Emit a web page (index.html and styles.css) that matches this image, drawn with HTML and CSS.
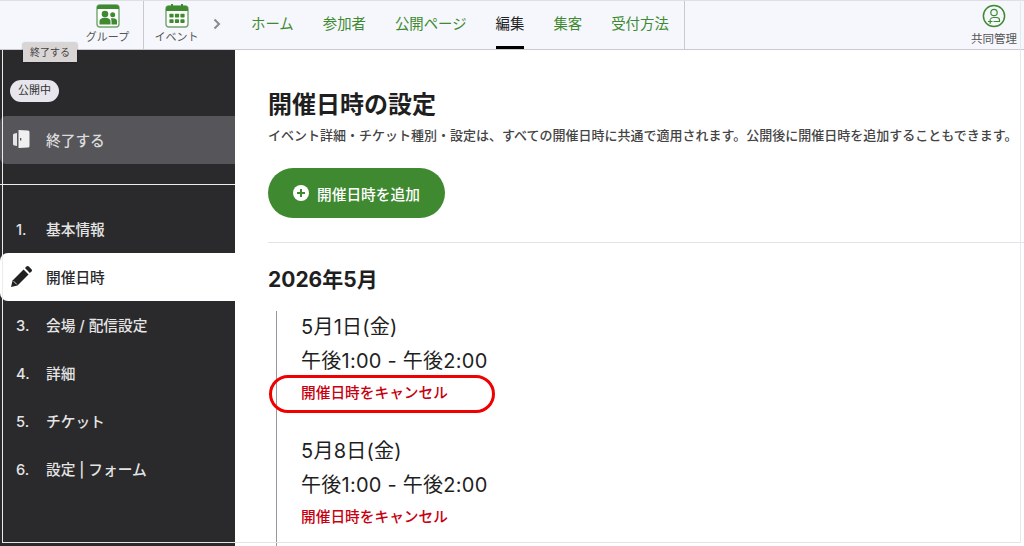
FILE: index.html
```html
<!DOCTYPE html>
<html lang="ja">
  <head>
    <meta charset="UTF-8" />
    <meta name="viewport" content="width=device-width, initial-scale=1.0" />
    <title>開催日時の設定</title>
    <link rel="stylesheet" href="styles.css">
  </head>
  <body>
    <header class="topbar">
      <a class="app-link app-group">
        <svg class="app-icon" viewBox="0 0 24 24" width="24" height="24">
          <rect x="1" y="1" width="22" height="22" rx="3" fill="#fff" stroke="#6fa568" stroke-width="1.4"/>
          <path d="M1 4a3 3 0 0 1 3-3h16a3 3 0 0 1 3 3v1H1z" fill="#3f8a31"/>
          <circle cx="9" cy="10" r="3.300" fill="#3f8a31"/>
          <circle cx="16.700" cy="10.800" r="2.500" fill="#3f8a31"/>
          <path d="M3.500 20.500v-3c0-2.700 2.300-3.800 5.500-3.800s5.500 1.100 5.500 3.800v3z" fill="#3f8a31"/>
          <path d="M15.500 20.500v-3.500c0-1-.4-1.800-.8-2.400.7-.3 1.400-.4 2.300-.4 2.700 0 4 1.100 4 3.100v3.200z" fill="#3f8a31"/>
        </svg>
        <span>グループ</span>
      </a>
      <a class="app-link app-event">
        <svg class="app-icon" viewBox="0 0 24 24" width="24" height="24">
          <rect x="1" y="2" width="22" height="21" rx="3" fill="#fff" stroke="#6fa568" stroke-width="1.4"/>
          <path d="M1 5a3 3 0 0 1 3-3h2V0h2v2h8V0h2v2h2a3 3 0 0 1 3 3v2H1z" fill="#3f8a31"/>
          <g fill="#3f8a31">
            <rect x="4.400" y="9.800" width="4.200" height="3.600" rx=".6"/>
            <rect x="9.900" y="9.800" width="4.200" height="3.600" rx=".6"/>
            <rect x="15.400" y="9.800" width="4.200" height="3.600" rx=".6"/>
            <rect x="4.400" y="15.300" width="4.200" height="3.600" rx=".6"/>
            <rect x="9.900" y="15.300" width="4.200" height="3.600" rx=".6"/>
            <rect x="15.400" y="15.300" width="4.200" height="3.600" rx=".6"/>
          </g>
        </svg>
        <span>イベント</span>
      </a>
      <svg class="crumb" viewBox="0 0 8 12" width="8" height="12">
        <path d="M1.500 1.500 6 6l-4.500 4.500" fill="none" stroke="#8a8a8a" stroke-width="2"/>
      </svg>
      <nav class="tabs">
        <a class="tab">ホーム</a>
        <a class="tab">参加者</a>
        <a class="tab">公開ページ</a>
        <a class="tab tab-active">編集</a>
        <a class="tab">集客</a>
        <a class="tab">受付方法</a>
      </nav>
      <a class="share-link">
        <svg viewBox="0 0 24 24" width="24" height="24">
          <circle cx="12" cy="12" r="10.600" fill="none" stroke="#3f8a31" stroke-width="1.500"/>
          <circle cx="12" cy="8.500" r="3.200" fill="none" stroke="#3f8a31" stroke-width="1.200"/>
          <path d="M8.500 15c.6-1 1.600-1.500 3-1.500h3c2 0 3 1 3 2.600v1.400h-6" fill="none" stroke="#3f8a31" stroke-width="1.200"/>
          <path d="M6 17.500h4.500M8.200 15.200v4.600" fill="none" stroke="#3f8a31" stroke-width="1.200"/>
        </svg>
        <span>共同管理</span>
      </a>
    </header>

    <div class="layout">
      <aside class="sidebar">
        <div class="status-wrap"><span class="status">公開中</span></div>
        <a class="finish-row">
          <svg viewBox="0 0 18 20" width="18" height="20">
            <path d="M2.500 4.500 5 4v13l-2.500-.5A1.500 1.500 0 0 1 1 15V6a1.500 1.500 0 0 1 1.500-1.500z" fill="#e6e6e6"/>
            <path d="M6.500 1 16 1.500a1.500 1.500 0 0 1 1.500 1.500v14a1.500 1.500 0 0 1-1.500 1.500l-9.500.5z" fill="#f0f0f0"/>
            <rect x="8" y="9" width="1.300" height="2.500" fill="#55555a"/>
          </svg>
          <span>終了する</span>
        </a>
        <ol class="steps">
          <li class="step"><span class="step-no">1.</span>基本情報</li>
          <li class="step step-current">
            <svg class="step-no" viewBox="0 0 20 20" width="21" height="21">
              <path d="M0 20l1.500-6.200L12 3.300l4.700 4.700L6.200 18.500z" fill="#222"/>
              <path d="M13.300 2 14.800.5a1.500 1.500 0 0 1 2.100 0l2.600 2.600a1.500 1.500 0 0 1 0 2.100L18 6.700z" fill="#222"/>
              <path d="M2.500 14.500l3 3" stroke="#fff" stroke-width=".8"/>
            </svg>
            開催日時
          </li>
          <li class="step"><span class="step-no">3.</span>会場 / 配信設定</li>
          <li class="step"><span class="step-no">4.</span>詳細</li>
          <li class="step"><span class="step-no">5.</span>チケット</li>
          <li class="step"><span class="step-no">6.</span>設定 | フォーム</li>
        </ol>
      </aside>

      <main class="content">
        <h1 class="page-title">開催日時の設定</h1>
        <p class="page-note">イベント詳細・チケット種別・設定は、すべての開催日時に共通で適用されます。公開後に開催日時を追加することもできます。</p>
        <button class="add-btn">
          <svg viewBox="0 0 16 16" width="16" height="16">
            <circle cx="8" cy="8" r="8" fill="#fff"/>
            <path d="M8 4v8M4 8h8" stroke="#3f8a31" stroke-width="2"/>
          </svg>
          開催日時を追加
        </button>
        <hr class="divider">
        <h2 class="month">2026年5月</h2>
        <div class="dates">
          <div class="date-item">
            <div class="date-line">5月1日(金)</div>
            <div class="date-line">午後1:00 - 午後2:00</div>
            <a class="cancel">開催日時をキャンセル<span class="cancel-ring"></span></a>
          </div>
          <div class="date-item">
            <div class="date-line">5月8日(金)</div>
            <div class="date-line">午後1:00 - 午後2:00</div>
            <a class="cancel">開催日時をキャンセル</a>
          </div>
        </div>
      </main>
    </div>

    <!-- tooltip and the thin frame lines that sit over the page -->
    <div class="tooltip">終了する</div>
    <div class="frame-left"></div>
    <div class="frame-mid"></div>
    <div class="frame-bottom"></div>
    <div class="frame-right"></div>
  </body>
</html>
```

FILE: styles.css
```css
* {
  box-sizing: border-box;
}
html, body {
  height: 100%;
  overflow: hidden;
}
body {
  margin: 0;
  background: #fff;
  color: #1f1f1f;
  font-family: Inter, "Noto Sans CJK JP", sans-serif;
}

/* top bar */
.topbar {
  height: 50px;
  display: flex;
  align-items: stretch;
  background: #f5f7fc;
  border-top: 1px solid #dfdfe4;
  border-bottom: 1px solid #c9c9ce;
}
.app-link {
  display: flex;
  flex-direction: column;
  align-items: center;
  color: #555;
  font-size: 11px;
  line-height: 13px;
  padding-top: 3px;
  white-space: nowrap;
}
.app-icon {
  margin-bottom: 3px;
}
.app-group {
  width: 144px;
  padding-left: 72px;
  border-right: 1px solid #c9c9ce;
}
.app-event {
  width: 65px;
}
.crumb {
  align-self: center;
  margin-left: 4px;
  margin-top: -3px;
}
.tabs {
  display: flex;
  gap: 29px;
  margin-left: 30px;
  border-right: 1px solid #c9c9ce;
  width: 434px;
}
.tab {
  height: 48px;
  line-height: 46px;
  font-size: 14.400px;
  color: #3f8a31;
}
.tab-active {
  color: #222;
  border-bottom: 3px solid #000;
}
.share-link {
  margin-left: auto;
  width: 56px;
  margin-right: 2px;
  display: flex;
  flex-direction: column;
  align-items: center;
  padding-top: 3px;
  font-size: 11.500px;
  line-height: 14px;
  color: #555;
  white-space: nowrap;
}
.share-link svg {
  margin-bottom: 4px;
}

/* sidebar */
.layout {
  display: flex;
  height: 496px;
}
.sidebar {
  width: 235px;
  flex: none;
  background: #2a2a2c;
  color: #e4e4e4;
  padding-top: 28px;
}
.status-wrap {
  padding-left: 10px;
  height: 38px;
}
.status {
  display: inline-block;
  height: 22px;
  padding: 0 8px;
  line-height: 21px;
  font-size: 11px;
  color: #333;
  background: #e6e6ec;
  border-radius: 11px;
}
.finish-row {
  display: flex;
  align-items: center;
  height: 48px;
  padding: 0 0 2px 12px;
  background: #55555a;
  border-radius: 6px 0 0 6px;
  font-size: 14.700px;
  font-weight: 500;
  color: #dcdcdc;
}
.finish-row span {
  margin-left: 16px;
}
.steps {
  list-style: none;
  margin: 41px 0 0;
  padding: 0;
}
.step {
  display: flex;
  align-items: center;
  height: 48px;
  padding: 0 0 2px 16px;
  font-size: 14.700px;
  font-weight: 500;
}
.step-no {
  width: 30px;
  flex: none;
  margin-top: 3px;
}
svg.step-no {
  width: 21px;
  margin: 0 14px 0 -5px;
}
.step-current {
  background: #fff;
  color: #2a2a2c;
  border-radius: 8px 0 0 8px;
}

/* main column */
.content {
  flex: 1;
  min-width: 0;
  padding: 40px 0 0 33px;
}
.page-title {
  margin: 0;
  font-size: 24px;
  line-height: 30px;
  font-weight: bold;
}
.page-note {
  margin: 6px 0 0;
  font-size: 13px;
  line-height: 18px;
  font-weight: 500;
  color: #444;
  white-space: nowrap;
}
.add-btn {
  display: flex;
  align-items: center;
  gap: 8px;
  margin-top: 24px;
  height: 50px;
  width: 177px;
  padding: 0 0 0 25px;
  border: 0;
  border-radius: 25px;
  background: #3f8a31;
  color: #fff;
  font: 500 14.700px Inter, "Noto Sans CJK JP", sans-serif;
}
.divider {
  margin: 24px 0 0;
  border: 0;
  border-top: 1px solid #e2e2e8;
}
.month {
  margin: 23px 0 0;
  font-size: 21px;
  line-height: 28px;
  font-weight: bold;
}
.dates {
  margin: 17px 0 0 8px;
  padding-left: 24px;
  border-left: 1px solid #97979f;
}
.date-item {
  height: 124px;
  padding-top: 1px;
}
.date-line {
  font-size: 20px;
  line-height: 33px;
  letter-spacing: 0.25px;
}
.date-line:first-child {
  margin: -1px 0 1px;
}
.cancel {
  position: relative;
  display: block;
  margin-top: 5px;
  font-size: 14.700px;
  line-height: 20px;
  font-weight: 500;
  color: #c80010;
}

/* hand-drawn highlight round the first link */
.cancel-ring {
  position: absolute;
  left: -32px;
  top: -8px;
  width: 226px;
  height: 38px;
  border: 3.500px solid #f00000;
  border-radius: 19px;
}

/* overlays */
.tooltip {
  position: absolute;
  left: 23px;
  top: 43px;
  width: 54px;
  height: 19px;
  background: #d9d5d5;
  font-size: 10px;
  line-height: 18px;
  text-align: center;
  color: #444;
  box-shadow: 0 0 2px rgba(0, 0, 0, 0.4);
}
.frame-left {
  position: absolute;
  left: 2px;
  top: 50px;
  width: 1px;
  height: 493px;
  background: #ececec;
}
.frame-mid {
  position: absolute;
  left: 0;
  top: 184px;
  width: 235px;
  height: 1px;
  background: #ececec;
}
.frame-bottom {
  position: absolute;
  left: 2px;
  top: 542px;
  width: 1018px;
  height: 1px;
  background: #e4e4e4;
}
.frame-right {
  position: absolute;
  left: 1020px;
  top: 0;
  width: 1px;
  height: 543px;
  background: #e8e8ec;
}
```
